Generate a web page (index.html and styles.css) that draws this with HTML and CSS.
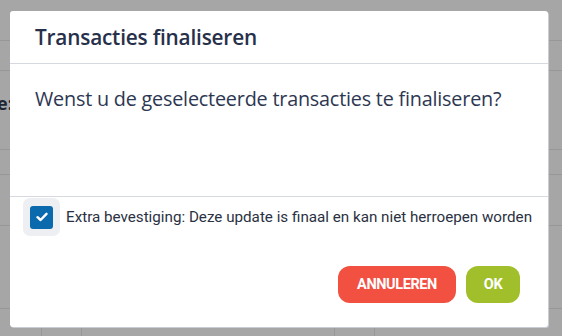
FILE: index.html
```html
<!DOCTYPE HTML>
<html>
<head>
 <title>Transacties finaliseren</title>
 <meta name="viewport" content="width=device-width, initial-scale=1">
 <link rel="stylesheet" href="styles.css">
</head>

<body>
<div class="backdrop">
  <div class="row row-head"></div>
  <div class="row row-a"></div>
  <div class="row row-b"><span class="cut-text">e:</span></div>
  <div class="row row-c"></div>
  <div class="row row-d"></div>
  <div class="row row-e"></div>
  <div class="row row-last">
    <div class="cell cell-1"></div>
    <div class="cell cell-2"></div>
    <div class="cell cell-3"></div>
    <div class="cell cell-4"></div>
    <div class="cell cell-5"></div>
  </div>
</div>

<div class="modal">
  <div class="modal-header">
    <h2 class="modal-title">Transacties finaliseren</h2>
  </div>
  <div class="modal-body">
    <p>Wenst u de geselecteerde transacties te finaliseren?</p>
  </div>
  <div class="modal-footer">
    <label class="confirm">
      <span class="check-wrap">
        <span class="check-box">
          <svg width="12" height="10" viewBox="0 0 12 10"><path d="M1.5 5.2 L4.6 8 L10.5 1.8" fill="none" stroke="#fff" stroke-width="2.4" stroke-linecap="round" stroke-linejoin="round"/></svg>
        </span>
      </span>
      <span class="confirm-text">Extra bevestiging: Deze update is finaal en kan niet herroepen worden</span>
    </label>
    <div class="actions">
      <button class="btn btn-cancel">ANNULEREN</button>
      <button class="btn btn-ok">OK</button>
    </div>
  </div>
</div>
</body>
</html>
```

FILE: styles.css
```css
html, body{
 margin:0;
 padding:0;
}
body{
 width:562px;
 height:336px;
 overflow:hidden;
 background-color:#a6a6a6;
 font-family:"Open Sans", sans-serif;
 position:relative;
}

/* table behind the overlay */
.backdrop{
 display:flex;
 flex-direction:column;
}
.row{
 border-bottom:1px solid #979797;
 box-sizing:border-box;
}
.row-head{ height:41px; }
.row-a{ height:30px; }
.row-b{ height:79px; position:relative; }
.row-c{ height:25px; }
.row-d{ height:51px; }
.row-e{ height:83px; }
.row-last{
 display:flex;
 border-bottom:none;
 height:40px;
}
.cell{
 border-right:1px solid #979797;
}
.cell-1{ width:41px; }
.cell-2{ width:39px; }
.cell-3{ width:252px; }
.cell-4{ width:39px; }
.cell-5{ flex:1; border-right:none; }
.cut-text{
 position:absolute;
 left:-3px;
 top:20px;
 font-size:18px;
 font-weight:700;
 color:#1f2633;
}

/* dialog */
.modal{
 position:absolute;
 left:10px;
 top:11px;
 width:538px;
 height:316px;
 background:#fff;
 border-radius:3px;
 box-shadow:1px 1px 0 #c9ccd4;
 display:flex;
 flex-direction:column;
 color:#27304a;
}
.modal-header{
 height:52px;
 border-bottom:1px solid #d6d9e0;
 padding:0 25px;
 display:flex;
 align-items:center;
}
.modal-title{
 margin:0;
 font-size:20.8px;
 font-weight:600;
 letter-spacing:-0.2px;
}
.modal-body{
 height:132px;
 border-bottom:1px solid #d6d9e0;
 padding:0 25px;
}
.modal-body p{
 margin:21px 0 0;
 font-size:19.8px;
 font-weight:400;
 letter-spacing:-0.2px;
 color:#2d3752;
}
.modal-footer{
 flex:1;
 padding:1px 13px 0;
}
.confirm{
 display:flex;
 align-items:center;
}
.check-wrap{
 flex:none;
 width:37px;
 height:38px;
 border-radius:7px;
 background:#edeff3;
 display:flex;
 align-items:center;
 justify-content:center;
}
.check-box{
 width:23px;
 height:23px;
 border-radius:3px;
 background:#0b69ad;
 display:flex;
 align-items:center;
 justify-content:center;
}
.confirm-text{
 margin-left:6px;
 font-family:Roboto, sans-serif;
 font-size:15.2px;
 white-space:nowrap;
 color:#2a3142;
}
.actions{
 display:flex;
 justify-content:flex-end;
 gap:10px;
 margin-top:30px;
 padding-right:15px;
}
.btn{
 border:none;
 height:37px;
 border-radius:12px;
 color:#fff;
 font-family:Roboto, sans-serif;
 font-weight:700;
 font-size:14.5px;
 letter-spacing:-0.4px;
 padding:0;
}
.btn-cancel{
 width:118px;
 background:#f25041;
}
.btn-ok{
 width:54px;
 background:#a1bf2b;
}
```
